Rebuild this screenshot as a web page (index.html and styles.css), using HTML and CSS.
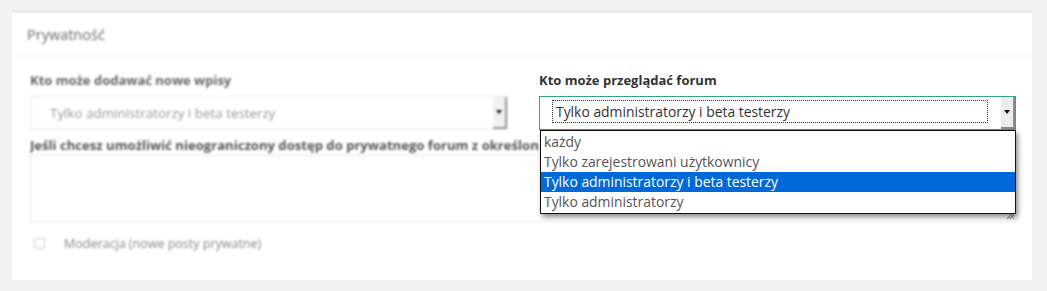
FILE: index.html
```html
<!DOCTYPE html>
<html lang="pl">
<head>
<meta charset="utf-8">
<link rel="stylesheet" href="styles.css">
</head>
<body>
<div class="panel">
  <div class="panel-head blur">Prywatność</div>
  <div class="panel-body">
    <div class="cols">
      <div class="col blur">
        <div class="label">Kto może dodawać nowe wpisy</div>
        <div class="select select-muted">
          <span class="select-text">Tylko administratorzy i beta testerzy</span>
          <span class="select-btn"><span class="tri"></span></span>
        </div>
      </div>
      <div class="col col-open">
        <div class="label label-sharp">Kto może przeglądać forum</div>
        <div class="select select-focus">
          <span class="select-text"><span class="focus-ring">Tylko administratorzy i beta testerzy</span></span>
          <span class="select-btn"><span class="tri"></span></span>
        </div>
        <ul class="dropdown">
          <li>każdy</li>
          <li>Tylko zarejestrowani użytkownicy</li>
          <li class="selected">Tylko administratorzy i beta testerzy</li>
          <li>Tylko administratorzy</li>
        </ul>
      </div>
    </div>
    <div class="label label-long blur">Jeśli chcesz umożliwić nieograniczony dostęp do prywatnego forum z określonych adresów IP, wpisz je poniżej</div>
    <div class="textarea">
      <div class="textarea-box blur"></div>
      <svg class="grip" width="9" height="9" viewBox="0 0 9 9">
        <path d="M8 1 L1 8 M8 4 L4 8 M8 7 L7 8" stroke="#9a9a9a" stroke-width="1.2" fill="none"/>
      </svg>
    </div>
    <div class="check-row blur">
      <span class="checkbox"></span>
      <span class="check-label">Moderacja (nowe posty prywatne)</span>
    </div>
  </div>
</div>
</body>
</html>
```
FILE: styles.css
```css
* { box-sizing: border-box; }
html, body { margin: 0; padding: 0; }
body {
  background: #f2f2f2;
  font-family: "Open Sans", "Noto Sans", sans-serif;
  width: 1047px;
  height: 291px;
  overflow: hidden;
  padding: 10px 15px 0 12px;
}
.panel {
  background: #fff;
  border-top: 3px solid #e8ecee;
  height: 270px;
}
.blur { filter: blur(1.1px); }
.panel-head {
  font-size: 14.5px;
  color: #6a6a6a;
  padding: 12px 15px 0 15px;
  height: 44px;
  border-bottom: 1px solid #f3f3f3;
}
.panel-body {
  padding: 14px 16px 0 18px;
}
.cols {
  display: flex;
  gap: 31px;
}
.col { width: 478px; position: relative; }
.col-open { width: 477px; }
.label {
  font-size: 13px;
  font-weight: 700;
  color: #666;
  height: 25px;
  white-space: nowrap;
}
.label-sharp {
  font-size: 13px;
  color: #333;
  height: 25px;
}
.select {
  height: 34px;
  border: 1px solid #ececec;
  display: flex;
  align-items: stretch;
  background: #fff;
}
.select-muted .select-text {
  color: #999;
  font-size: 13.4px;
  padding-left: 19px;
  line-height: 32px;
  flex: 1;
}
.select-muted .select-btn {
  width: 14px;
  background: #f2f2f2;
  border-right: 2px solid #999;
  border-bottom: 2px solid #999;
}
.select-focus {
  border: 1px solid #3c9f87;
}
.select-focus .select-text {
  flex: 1;
  padding: 3px 13px 6px 12px;
}
.focus-ring {
  display: block;
  border: 1px dotted #333;
  height: 23px;
  font-size: 13.9px;
  color: #333;
  line-height: 21px;
  padding-left: 3px;
  white-space: nowrap;
}
.select-btn {
  width: 14px;
  background: #ececec;
  border-right: 2px solid #8c8c8c;
  border-bottom: 2px solid #8c8c8c;
  display: flex;
  align-items: center;
  justify-content: center;
}
.tri {
  width: 0; height: 0;
  border-left: 3.5px solid transparent;
  border-right: 3.5px solid transparent;
  border-top: 4px solid #111;
}
.dropdown {
  position: absolute;
  left: 1px;
  top: 59px;
  width: 476px;
  margin: 0;
  padding: 1px 0;
  list-style: none;
  background: #fff;
  border: 1px solid #111;
  box-shadow: 2px 3px 5px rgba(0,0,0,0.45);
  z-index: 5;
}
.dropdown li {
  font-size: 13.9px;
  color: #555;
  height: 20px;
  line-height: 20px;
  padding-left: 3px;
  white-space: nowrap;
}
.dropdown li.selected {
  background: #0069d9;
  color: #fff;
}
.label-long {
  margin-top: 6px;
  height: 19px;
  width: 509px;
  overflow: hidden;
  font-size: 13.1px;
  color: #555;
}
.textarea {
  position: relative;
  width: 986px;
  height: 67px;
}
.textarea-box {
  height: 100%;
  border: 1px solid #eaeaea;
}
.grip {
  position: absolute;
  right: 1px;
  bottom: 2px;
}
.check-row {
  display: flex;
  align-items: center;
  height: 42px;
  padding-left: 4px;
}
.checkbox {
  width: 11px;
  height: 11px;
  border: 1px solid #ccc;
  border-radius: 2px;
  margin-right: 19px;
}
.check-label {
  font-size: 12.5px;
  color: #888;
}
```
